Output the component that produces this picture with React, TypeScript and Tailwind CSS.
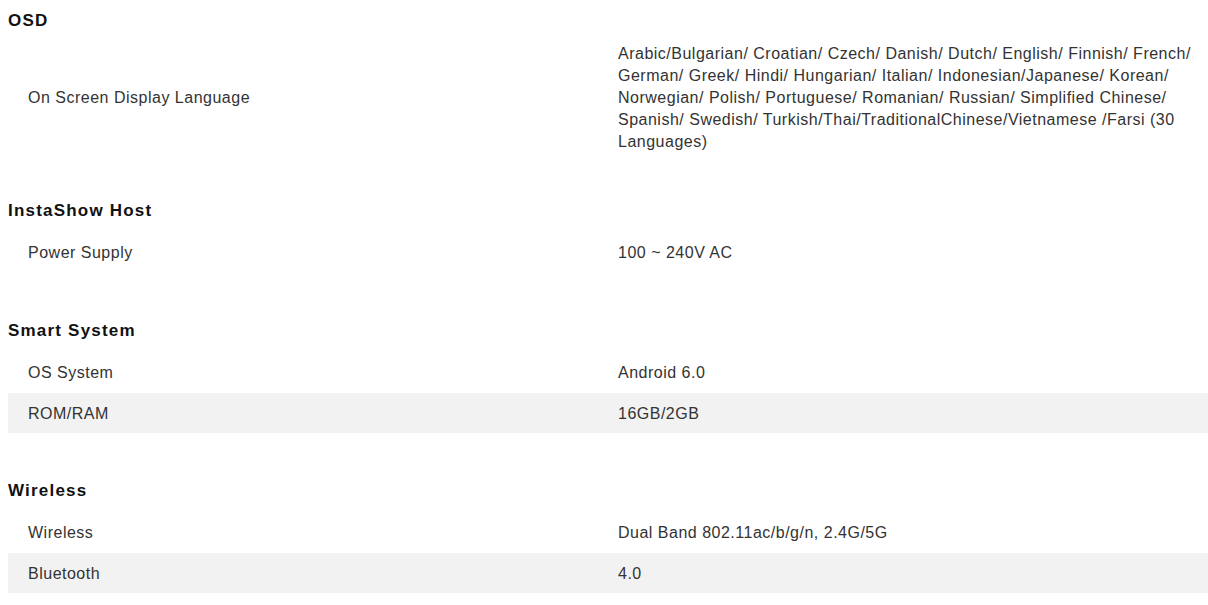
import React from "react";

type Row = {
  label: string;
  value: string;
};

type Section = {
  title: string;
  spacing: string;
  rows: Row[];
};

const specs: Section[] = [
  {
    title: "OSD",
    spacing: "",
    rows: [
      {
        label: "On Screen Display Language",
        value:
          "Arabic/Bulgarian/ Croatian/ Czech/ Danish/ Dutch/ English/ Finnish/ French/ German/ Greek/ Hindi/ Hungarian/ Italian/ Indonesian/Japanese/ Korean/ Norwegian/ Polish/ Portuguese/ Romanian/ Russian/ Simplified Chinese/ Spanish/ Swedish/ Turkish/Thai/TraditionalChinese/Vietnamese /Farsi (30 Languages)",
      },
    ],
  },
  {
    title: "InstaShow Host",
    spacing: "mt-[47px]",
    rows: [{ label: "Power Supply", value: "100 ~ 240V AC" }],
  },
  {
    title: "Smart System",
    spacing: "mt-12",
    rows: [
      { label: "OS System", value: "Android 6.0" },
      { label: "ROM/RAM", value: "16GB/2GB" },
    ],
  },
  {
    title: "Wireless",
    spacing: "mt-[47px]",
    rows: [
      { label: "Wireless", value: "Dual Band 802.11ac/b/g/n, 2.4G/5G" },
      { label: "Bluetooth", value: "4.0" },
    ],
  },
];

const SpecSection = ({ section }: { section: Section }) => {
  return (
    <section className={section.spacing}>
      <h2 className="text-[17px] leading-[22px] font-bold tracking-[1.2px] text-[#111]">
        {section.title}
      </h2>
      <div className="mt-[10px] flex flex-col gap-px">
        {section.rows.map((row, i) => (
          <div
            key={row.label}
            className={`grid grid-cols-[610px_1fr] min-h-[40px] items-center pt-px ${i % 2 === 1 ? "bg-[#f2f2f2]" : "bg-white"}`}
          >
            <div className="pl-5 pr-4">{row.label}</div>
            <div className="pr-[10px]">{row.value}</div>
          </div>
        ))}
      </div>
    </section>
  );
};

export default function App() {
  return (
    <div
      className="min-h-screen bg-white pl-2 pt-[10px] text-[16px] leading-[22px] tracking-[0.5px] text-[#333]"
      style={{ fontFamily: '"Liberation Sans", Arial, sans-serif' }}
    >
      {specs.map((s) => (
        <SpecSection key={s.title} section={s} />
      ))}
    </div>
  );
}
